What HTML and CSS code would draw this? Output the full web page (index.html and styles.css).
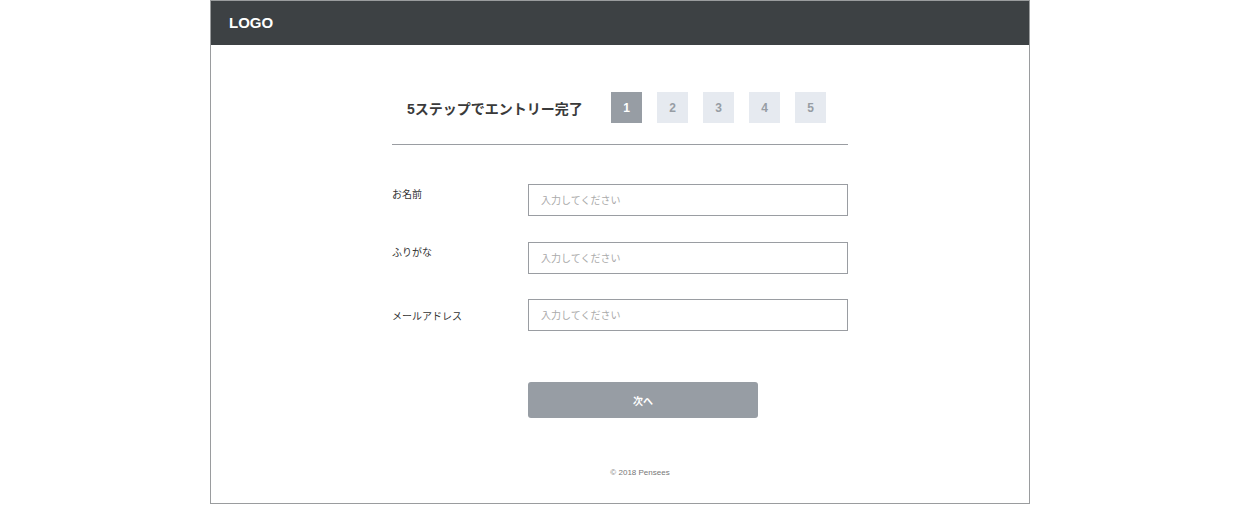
FILE: index.html
```html
<!DOCTYPE html>
<html lang="ja">
<head>
    <meta charset="UTF-8">
    <meta name="viewport" content="width=device-width, initial-scale=1.0">
    <title>エントリー</title>
    <link rel="stylesheet" href="styles.css">
</head>
<body>
    <div class="frame">
        <header class="header">
            <span class="logo">LOGO</span>
        </header>

        <main class="content">
            <div class="steps">
                <h1 class="steps-title">5ステップでエントリー完了</h1>
                <ol class="step-list">
                    <li class="step active">1</li>
                    <li class="step">2</li>
                    <li class="step">3</li>
                    <li class="step">4</li>
                    <li class="step">5</li>
                </ol>
            </div>

            <form class="form">
                <div class="row">
                    <label class="label" for="name">お名前</label>
                    <input class="input" id="name" type="text" placeholder="入力してください">
                </div>
                <div class="row">
                    <label class="label" for="kana">ふりがな</label>
                    <input class="input" id="kana" type="text" placeholder="入力してください">
                </div>
                <div class="row row-center">
                    <label class="label" for="mail">メールアドレス</label>
                    <input class="input" id="mail" type="text" placeholder="入力してください">
                </div>

                <div class="row actions">
                    <button type="button" class="next-btn">次へ</button>
                </div>
            </form>

            <footer class="footer">© 2018 Pensees</footer>
        </main>
    </div>
</body>
</html>
```

FILE: styles.css
```css
body {
  margin: 0;
  padding: 0;
  background: #fff;
  font-family: "Liberation Sans", "Noto Sans CJK JP", sans-serif;
  color: #333;
}

.frame {
  width: 818px;
  height: 502px;
  margin: 0 auto;
  border: 1px solid #9a9c9e;
  display: flex;
  flex-direction: column;
}

.header {
  height: 44px;
  box-sizing: border-box;
  padding: 0 0 2px 18px;
  background-color: #3d4144;
  display: flex;
  align-items: center;
}

.logo {
  color: #fff;
  font-weight: bold;
  font-size: 15px;
}

.content {
  width: 456px;
  margin: 0 auto;
  padding-top: 47px;
  display: flex;
  flex-direction: column;
  flex: 1;
}

.steps {
  display: flex;
  align-items: center;
  padding: 0 0 21px 15px;
  border-bottom: 1px solid #9a9da2;
}

.steps-title {
  margin: 0;
  font-size: 14px;
  font-weight: bold;
  color: #3a3a3a;
  width: 204px;
}

.step-list {
  list-style: none;
  margin: 0;
  padding: 0;
  display: flex;
  gap: 15px;
}

.step {
  width: 31px;
  height: 31px;
  display: flex;
  align-items: center;
  justify-content: center;
  background-color: #e6eaf0;
  color: #979da4;
  font-size: 12px;
  font-weight: bold;
}

.step.active {
  background-color: #979da4;
  color: #fff;
}

.form {
  padding-top: 39px;
  display: flex;
  flex-direction: column;
  gap: 26px;
}

.row {
  display: flex;
  align-items: flex-start;
}

.row-center {
  align-items: center;
  margin-top: -1px;
}

.label {
  width: 136px;
  font-size: 10px;
  color: #333;
  padding-top: 2px;
}

.row-center .label {
  padding-top: 0;
}

.input {
  width: 320px;
  height: 32px;
  box-sizing: border-box;
  border: 1px solid #9a9da2;
  padding: 0 12px;
  font-size: 10px;
  font-family: "Liberation Sans", "Noto Sans CJK JP", sans-serif;
  outline: none;
}

.input::placeholder {
  color: #aaa;
}

.actions {
  padding: 25px 0 0 136px;
}

.next-btn {
  width: 230px;
  height: 36px;
  border: none;
  border-radius: 3px;
  background-color: #979da4;
  color: #fff;
  font-weight: bold;
  font-size: 10px;
  font-family: "Liberation Sans", "Noto Sans CJK JP", sans-serif;
  cursor: pointer;
}

.footer {
  margin-top: 50px;
  padding-left: 136px;
  width: 224px;
  text-align: center;
  font-size: 8px;
  color: #777;
}
```
